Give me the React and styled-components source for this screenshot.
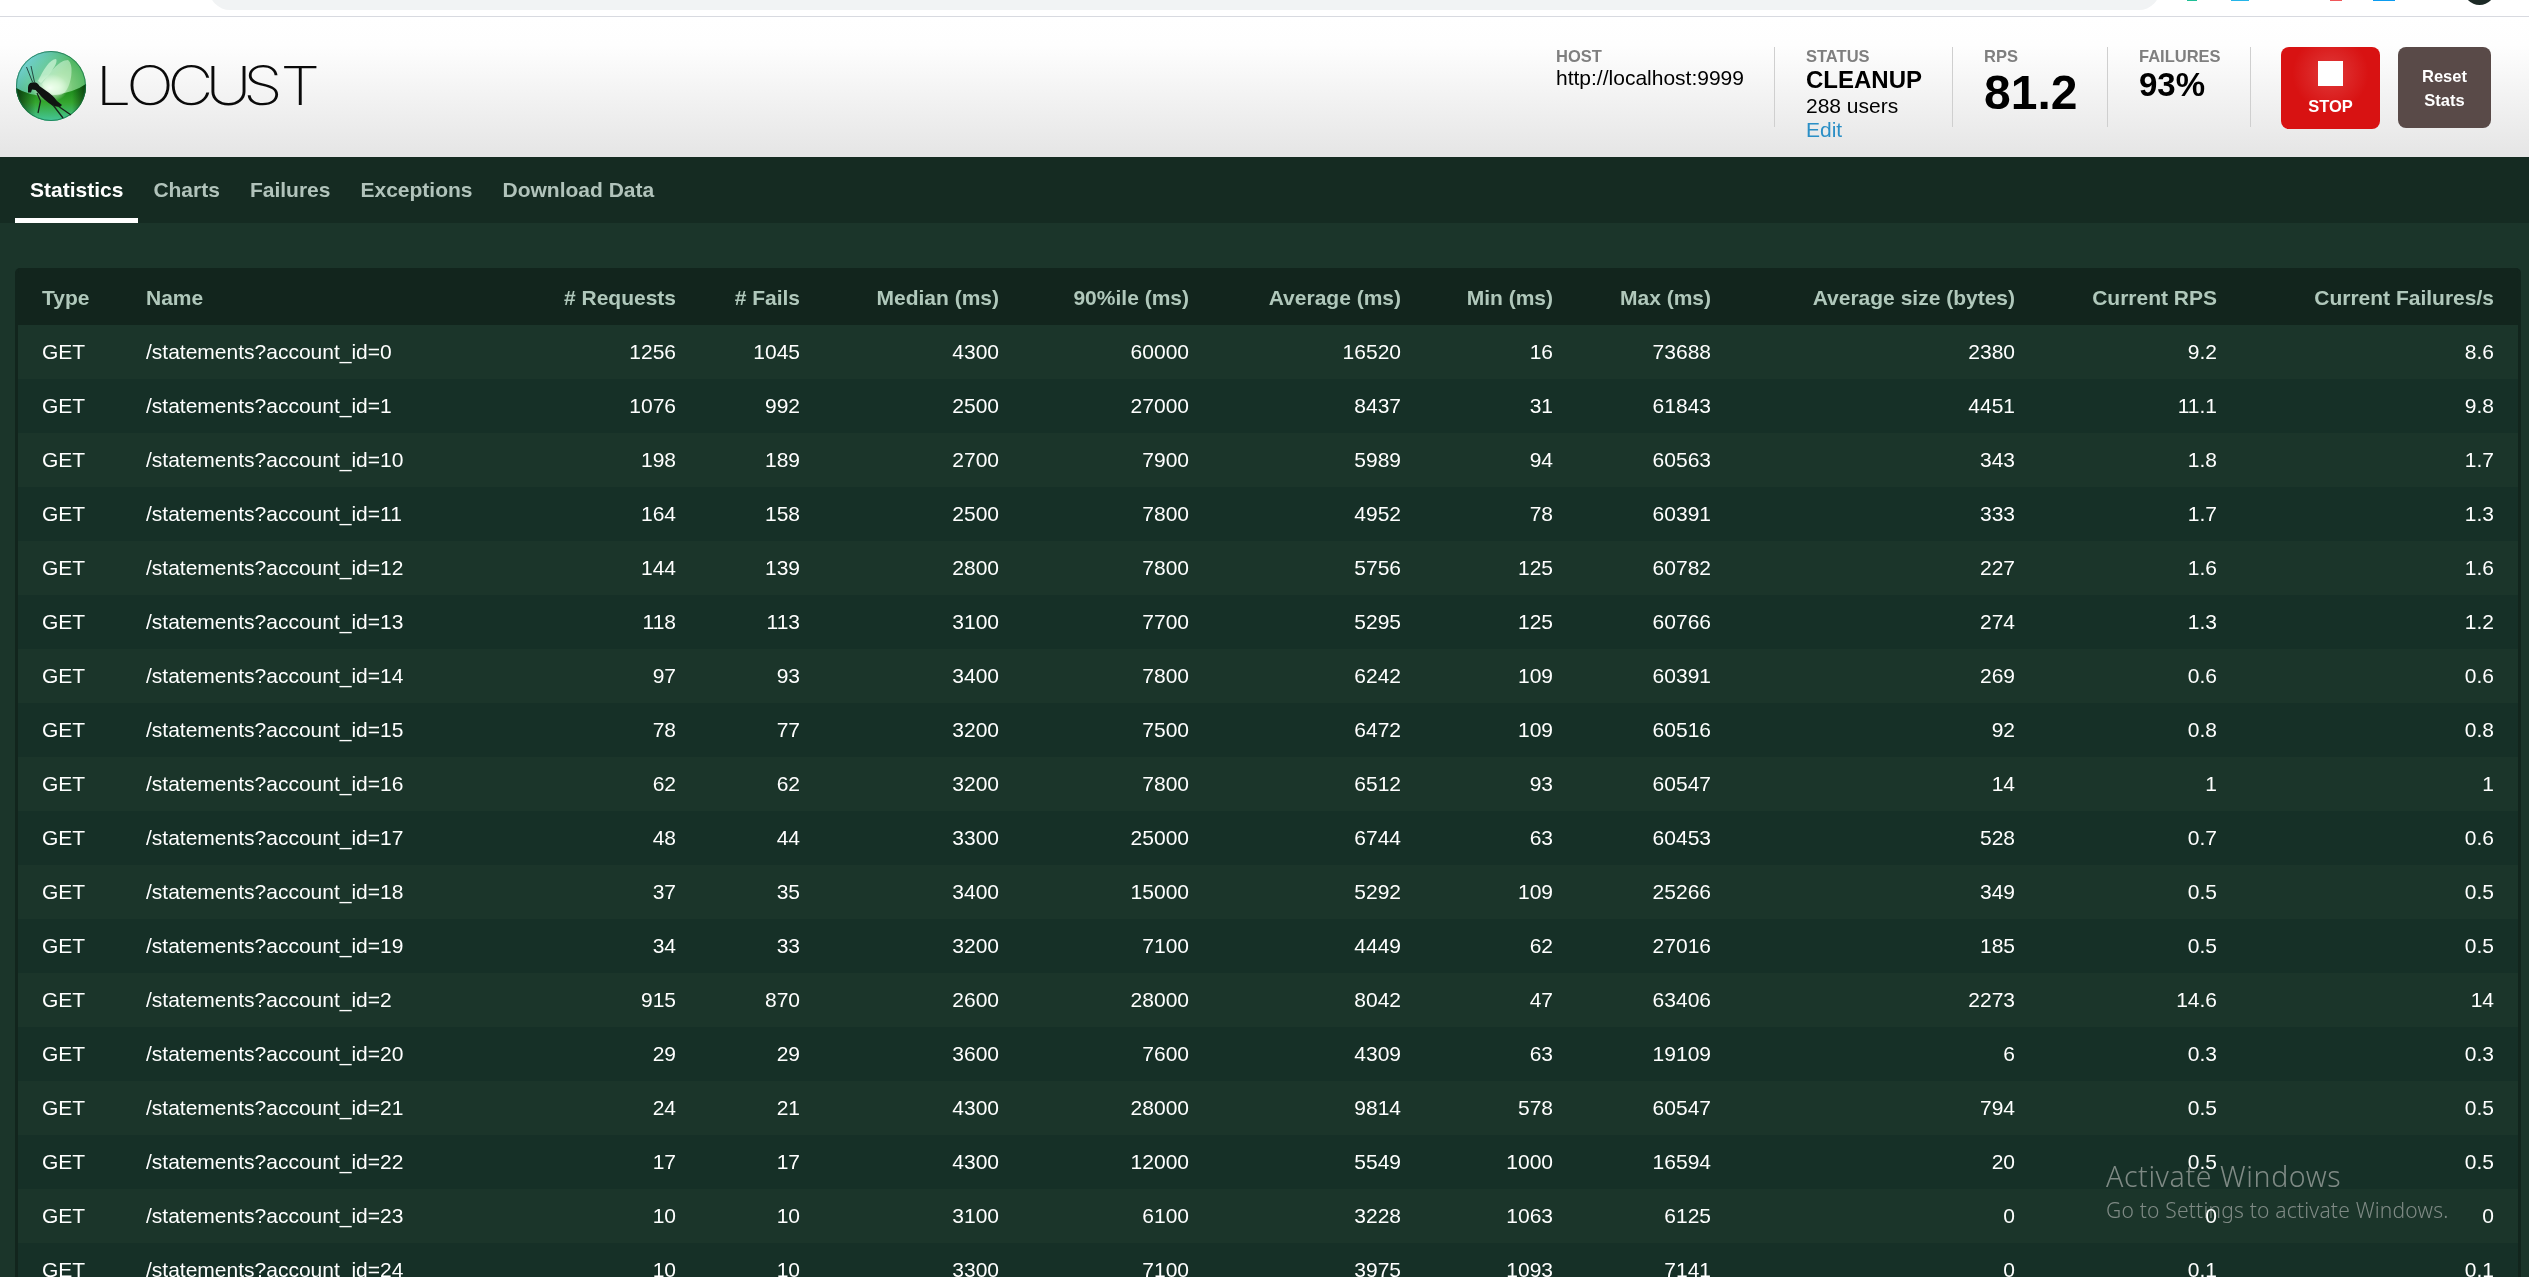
import React from "react";
import styled, { createGlobalStyle } from "styled-components";

const GlobalStyle = createGlobalStyle`
  * { box-sizing: border-box; }
  html, body { margin: 0; height: 1277px; overflow: hidden; background: #1b352a; }
  body { font-family: Arial, "Liberation Sans", sans-serif; font-size: 21px; color: #fff; }
`;

const Page = styled.div`
  position: relative;
  height: 1277px;
  overflow: hidden;
  display: flex;
  flex-direction: column;
`;

const BrowserBar = styled.div`
  flex: none;
  display: flex;
  align-items: flex-end;
  height: 17px;
  padding: 0 33px 6px 209px;
  background: #fff;
  border-bottom: 1px solid #d8dae0;
  overflow: hidden;
`;

const AddressPill = styled.div`
  width: 1951px;
  height: 42px;
  flex: none;
  border-radius: 21px;
  background: #f1f3f4;
`;

const Extensions = styled.svg`
  flex: none;
  width: 327px;
  height: 10px;
  margin-left: 9px;
`;

const Header = styled.header`
  flex: none;
  display: flex;
  justify-content: space-between;
  height: 140px;
  padding: 30px 38px 0 15px;
  background: linear-gradient(to bottom, #ffffff 0%, #fefefe 20%, #e6e6e6 97%);
  color: #000;
`;

const Brand = styled.div`
  display: flex;
  align-items: flex-start;
`;

const Emblem = styled.svg`
  width: 72px;
  height: 72px;
  margin-top: 3px;
`;

const Wordmark = styled.svg`
  width: 240px;
  height: 72px;
  margin-top: 3px;
  font: 200 54px Inter, sans-serif;
  fill: #0a0a0a;
`;

const Metrics = styled.div`
  display: flex;
`;

const Metric = styled.div`
  width: ${(p) => p.$width}px;
  height: 80px;
  padding-left: 31px;
  border-right: 1px solid #cfcfcf;
  white-space: nowrap;
`;

const Label = styled.div`
  height: 19px;
  font: bold 16.5px/19px Arial, "Liberation Sans", sans-serif;
  color: #7f7f7f;
`;

const Value = styled.div`
  font-size: ${(p) => p.$size || 21}px;
  line-height: ${(p) => p.$line || 24}px;
  font-weight: ${(p) => (p.$bold ? "bold" : "normal")};
`;

const EditLink = styled.a`
  display: block;
  line-height: 24px;
  color: #2b8fc6;
`;

const Actions = styled.div`
  display: flex;
  align-items: flex-start;
  gap: 18px;
  margin-left: 30px;
`;

const Button = styled.button`
  display: flex;
  flex-direction: column;
  align-items: center;
  border: 0;
  border-radius: 8px;
  padding: 0;
  font: bold 16.5px/24px Arial, "Liberation Sans", sans-serif;
  color: #fff;
`;

const StopButton = styled(Button)`
  width: 99px;
  height: 82px;
  padding-top: 14px;
  background: radial-gradient(circle at 50% 32%, #e03a3a 0, #d81212 38px);
`;

const StopSquare = styled.span`
  width: 25px;
  height: 25px;
  margin-bottom: 8px;
  background: #fff;
`;

const ResetButton = styled(Button)`
  width: 93px;
  height: 81px;
  padding-top: 17px;
  background: #594a48;
`;

const Tabs = styled.nav`
  flex: none;
  display: flex;
  height: 66px;
  padding-left: 15px;
  background: #152b22;
`;

const Tab = styled.a`
  padding: 20px 15px 0;
  height: 66px;
  line-height: 26px;
  font-weight: bold;
  color: ${(p) => (p.$active ? "#fff" : "#b1c3bb")};
  border-bottom: 5px solid ${(p) => (p.$active ? "#fff" : "transparent")};
`;

const Content = styled.main`
  flex: none;
  padding: 45px 8px 0 15px;
`;

const StatsTable = styled.table`
  width: 2506px;
  table-layout: fixed;
  border-collapse: separate;
  border-spacing: 0;
  border: 3px solid #12251d;
  border-top: 0;
  border-radius: 5px 5px 0 0;
  background: #12251d;
`;

const Col = styled.col`
  width: ${(p) => p.$width}px;
`;

const HeadCell = styled.th`
  height: 57px;
  padding: 2px 24px 0;
  text-align: ${(p) => (p.$left ? "left" : "right")};
  color: #b0c8bb;
  white-space: nowrap;
`;

const Row = styled.tr`
  background: ${(p) => (p.$dark ? "#163027" : "#1b352a")};
`;

const Cell = styled.td`
  height: 54px;
  padding: 0 24px;
  text-align: ${(p) => (p.$left ? "left" : "right")};
  white-space: nowrap;
`;

const Watermark = styled.div`
  position: absolute;
  left: 2106px;
  top: 1156px;
  font-family: "Noto Sans", sans-serif;
  color: #7f8a85;
  mix-blend-mode: lighten;
  white-space: nowrap;
`;

const WatermarkTitle = styled.div`
  font-size: 28.5px;
  line-height: 40px;
  font-weight: 300;
  letter-spacing: 0.6px;
`;

const WatermarkText = styled.div`
  font-size: 21px;
  line-height: 29px;
  font-weight: 300;
  letter-spacing: 0.2px;
`;

const columns = [
  ["Type", 104],
  ["Name", 398],
  ["# Requests", 180],
  ["# Fails", 124],
  ["Median (ms)", 199],
  ["90%ile (ms)", 190],
  ["Average (ms)", 212],
  ["Min (ms)", 152],
  ["Max (ms)", 158],
  ["Average size (bytes)", 304],
  ["Current RPS", 202],
  ["Current Failures/s", 277],
];

const rows = [
  ["0", 1256, 1045, 4300, 60000, 16520, 16, 73688, 2380, 9.2, 8.6],
  ["1", 1076, 992, 2500, 27000, 8437, 31, 61843, 4451, 11.1, 9.8],
  ["10", 198, 189, 2700, 7900, 5989, 94, 60563, 343, 1.8, 1.7],
  ["11", 164, 158, 2500, 7800, 4952, 78, 60391, 333, 1.7, 1.3],
  ["12", 144, 139, 2800, 7800, 5756, 125, 60782, 227, 1.6, 1.6],
  ["13", 118, 113, 3100, 7700, 5295, 125, 60766, 274, 1.3, 1.2],
  ["14", 97, 93, 3400, 7800, 6242, 109, 60391, 269, 0.6, 0.6],
  ["15", 78, 77, 3200, 7500, 6472, 109, 60516, 92, 0.8, 0.8],
  ["16", 62, 62, 3200, 7800, 6512, 93, 60547, 14, 1, 1],
  ["17", 48, 44, 3300, 25000, 6744, 63, 60453, 528, 0.7, 0.6],
  ["18", 37, 35, 3400, 15000, 5292, 109, 25266, 349, 0.5, 0.5],
  ["19", 34, 33, 3200, 7100, 4449, 62, 27016, 185, 0.5, 0.5],
  ["2", 915, 870, 2600, 28000, 8042, 47, 63406, 2273, 14.6, 14],
  ["20", 29, 29, 3600, 7600, 4309, 63, 19109, 6, 0.3, 0.3],
  ["21", 24, 21, 4300, 28000, 9814, 578, 60547, 794, 0.5, 0.5],
  ["22", 17, 17, 4300, 12000, 5549, 1000, 16594, 20, 0.5, 0.5],
  ["23", 10, 10, 3100, 6100, 3228, 1063, 6125, 0, 0, 0],
  ["24", 10, 10, 3300, 7100, 3975, 1093, 7141, 0, 0.1, 0.1],
];

function LocustEmblem() {
  return (
    <Emblem viewBox="15 50 72 72">
      <defs>
        <radialGradient id="orb" cx="0.6" cy="0.52" r="0.6">
          <stop offset="0" stopColor="#bdeabb" />
          <stop offset="0.35" stopColor="#78c97a" />
          <stop offset="0.75" stopColor="#4cb45f" />
          <stop offset="1" stopColor="#248c4c" />
        </radialGradient>
        <linearGradient id="low" x1="0" y1="0" x2="0" y2="1">
          <stop offset="0" stopColor="#128012" />
          <stop offset="0.5" stopColor="#35a62f" />
          <stop offset="1" stopColor="#45c79b" />
        </linearGradient>
        <linearGradient id="sky" x1="0.1" y1="0.15" x2="0.5" y2="0.5">
          <stop offset="0" stopColor="#7fdde8" />
          <stop offset="1" stopColor="#7fdde8" stopOpacity="0" />
        </linearGradient>
        <linearGradient id="shade" x1="0" y1="0" x2="1" y2="0">
          <stop offset="0" stopColor="#021a08" stopOpacity="0.75" />
          <stop offset="0.28" stopColor="#021a08" stopOpacity="0" />
          <stop offset="0.8" stopColor="#021a08" stopOpacity="0" />
          <stop offset="1" stopColor="#021a08" stopOpacity="0.65" />
        </linearGradient>
        <radialGradient id="glow">
          <stop offset="0" stopColor="#fff" stopOpacity="1" />
          <stop offset="0.4" stopColor="#f4fff0" stopOpacity="0.7" />
          <stop offset="1" stopColor="#fff" stopOpacity="0" />
        </radialGradient>
      </defs>
      <circle cx="51" cy="86" r="35" fill="url(#orb)" />
      <circle cx="51" cy="86" r="35" fill="url(#sky)" fillOpacity="0.9" />
      <path d="M16 88 Q33 98 54 95 T86 84 A35 35 0 0 1 16 88Z" fill="url(#low)" />
      <path d="M16 88 Q33 98 54 95 T86 84 A35 35 0 0 1 16 88Z" fill="url(#shade)" />
      <ellipse cx="50" cy="88" rx="18" ry="14" fill="url(#glow)" />
      <path d="M38 81 C43 70 50 59 56 59 C59 63 49 75 41 83Z" fill="#e5ffe5" fillOpacity="0.6" />
      <path d="M42 84 C48 74 59 60 68 60 C74 64 72 84 65 92 C58 99 49 94 42 84Z" fill="#e5ffe5" fillOpacity="0.5" />
      <circle cx="51" cy="86" r="34.5" fill="none" stroke="#126b49" strokeOpacity="0.7" />
      <path d="M28 88 Q28 83 32 82.5 Q37 81 39.5 86 L45 90 Q54 96 57 101 L62 105 L60 107 L53 106 Q44 100 39 94 L35.5 90 L32 89.5 L31 92.5 L28 92.5Z" fill="#101411" />
      <path d="M37 93 L40.5 101 L38 113 M53 105 L63 118 M58 106 L71 115" fill="none" stroke="#17231c" strokeWidth="1.3" />
      <path d="M32.5 82 L26.5 67 M34.5 82 L31 66" fill="none" stroke="#1c3a35" strokeWidth="0.9" />
    </Emblem>
  );
}

export default function App() {
  return (
    <>
      <GlobalStyle />
      <Page>
        <BrowserBar>
          <AddressPill />
          <Extensions viewBox="2169 0 327 10">
            <rect x="2187" y="0" width="10" height="1" fill="#1fbf96" />
            <rect x="2231" y="0" width="18" height="1" fill="#25b5e8" />
            <rect x="2330" y="0" width="12" height="1" fill="#f0575a" />
            <rect x="2373" y="0" width="22" height="1" fill="#0c9cf0" />
            <circle cx="2479.5" cy="-11" r="16" fill="#1c2a26" />
          </Extensions>
        </BrowserBar>
        <Header>
          <Brand>
            <LocustEmblem />
            <Wordmark viewBox="87 50 240 72">
              <text transform="scale(1.17 1)" x="81.8 107.9 143.2 175.6 208 239.7" y="105">LOCUST</text>
            </Wordmark>
          </Brand>
          <Metrics>
            <Metric $width={250}>
              <Label>HOST</Label>
              <Value>http://localhost:9999</Value>
            </Metric>
            <Metric $width={178}>
              <Label>STATUS</Label>
              <Value $bold $size={24} $line={28}>CLEANUP</Value>
              <Value>288 users</Value>
              <EditLink>Edit</EditLink>
            </Metric>
            <Metric $width={155}>
              <Label>RPS</Label>
              <Value $bold $size={48} $line={54}>81.2</Value>
            </Metric>
            <Metric $width={143}>
              <Label>FAILURES</Label>
              <Value $bold $size={33} $line={38}>93%</Value>
            </Metric>
            <Actions>
              <StopButton>
                <StopSquare />
                STOP
              </StopButton>
              <ResetButton>
                <span>Reset</span>
                <span>Stats</span>
              </ResetButton>
            </Actions>
          </Metrics>
        </Header>
        <Tabs>
          <Tab $active>Statistics</Tab>
          <Tab>Charts</Tab>
          <Tab>Failures</Tab>
          <Tab>Exceptions</Tab>
          <Tab>Download Data</Tab>
        </Tabs>
        <Content>
          <StatsTable>
            <colgroup>
              {columns.map(([name, width]) => <Col key={name} $width={width} />)}
            </colgroup>
            <thead>
              <tr>
                {columns.map(([name], i) => <HeadCell key={name} $left={i < 2}>{name}</HeadCell>)}
              </tr>
            </thead>
            <tbody>
              {rows.map(([id, ...values], i) => (
                <Row key={id} $dark={i % 2 === 1}>
                  <Cell $left>GET</Cell>
                  <Cell $left>{`/statements?account_id=${id}`}</Cell>
                  {values.map((value, j) => <Cell key={j}>{value}</Cell>)}
                </Row>
              ))}
            </tbody>
          </StatsTable>
        </Content>
        <Watermark>
          <WatermarkTitle>Activate Windows</WatermarkTitle>
          <WatermarkText>Go to Settings to activate Windows.</WatermarkText>
        </Watermark>
      </Page>
    </>
  );
}
